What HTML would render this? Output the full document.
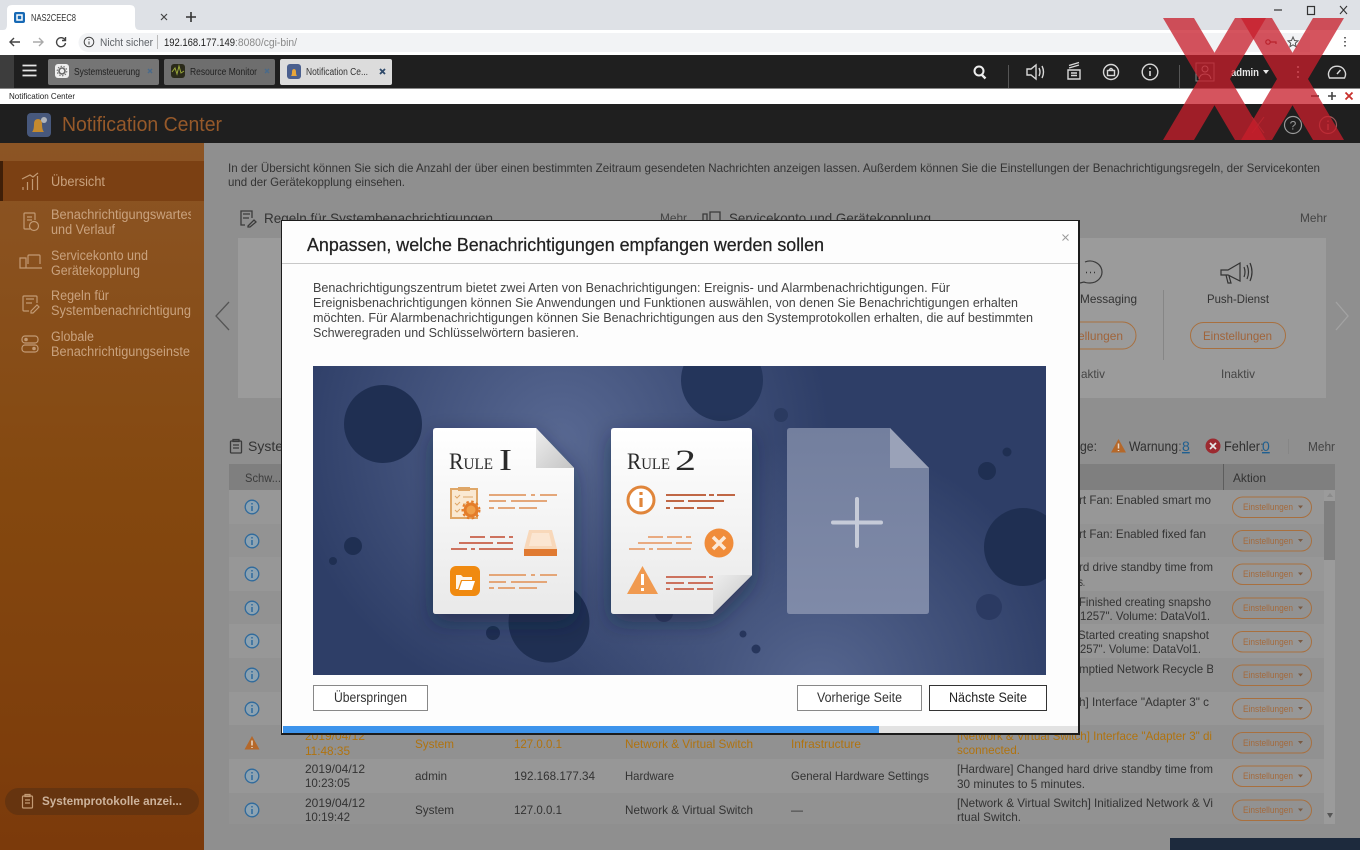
<!DOCTYPE html>
<html lang="de"><head><meta charset="utf-8"><title>Notification Center</title>
<style>
html,body{margin:0;padding:0;background:#8f8f8f;width:1360px;height:850px;overflow:hidden}
svg{display:block;font-family:"Liberation Sans",sans-serif}
.r{font-size:12px;fill:#333}
.o{font-size:12px;fill:#b0730f}
.b{font-size:9.5px;fill:#a46a3c}
.s{font-size:13.5px;fill:#c9a27e}
.l1{stroke:#e29c68;stroke-width:1.8;fill:none}
.l2{stroke:#c8604a;stroke-width:1.8;fill:none}
.l3{stroke:#b8532c;stroke-width:1.8;fill:none}
.l4{stroke:#e8a070;stroke-width:1.8;fill:none}
.i{fill:none;stroke:#d8d8d8;stroke-width:1.4}
.p{fill:none;stroke:#a8703f;stroke-width:1}
.sb{fill:none;stroke:#c29a74;stroke-width:1.2}
.g{fill:none;stroke:#3a3a3a;stroke-width:1.3}
</style></head><body>
<svg width="1360" height="850" viewBox="0 0 1360 850" xmlns="http://www.w3.org/2000/svg">
<defs>
<clipPath id="cs"><rect x="0" y="143" width="191" height="300"/></clipPath>
<clipPath id="ct"><rect x="229" y="490" width="984" height="334"/></clipPath>
<clipPath id="ci"><rect x="313" y="366" width="733" height="309"/></clipPath>
<radialGradient id="g1" gradientUnits="userSpaceOnUse" cx="560" cy="440" r="270"><stop offset="0" stop-color="#586892"/><stop offset="1" stop-color="#586892" stop-opacity="0"/></radialGradient>
<radialGradient id="g2" gradientUnits="userSpaceOnUse" cx="820" cy="690" r="250"><stop offset="0" stop-color="#56668f"/><stop offset="1" stop-color="#56668f" stop-opacity="0"/></radialGradient>
<linearGradient id="cw" x1="0" y1="0" x2="0" y2="1"><stop offset="0" stop-color="#fff"/><stop offset="1" stop-color="#e9e9e9"/></linearGradient>
<linearGradient id="cf" x1="0" y1="0" x2="1" y2="1"><stop offset="0" stop-color="#eee"/><stop offset="1" stop-color="#c4c4c4"/></linearGradient>
<linearGradient id="cg" x1="0" y1="0" x2="0" y2="1"><stop offset="0" stop-color="#737f9e"/><stop offset="1" stop-color="#7f8aa8"/></linearGradient>
<linearGradient id="sbg" x1="0" y1="0" x2="0" y2="1"><stop offset="0" stop-color="#8c5525"/><stop offset=".5" stop-color="#84480f"/><stop offset="1" stop-color="#7b3a0b"/></linearGradient>
<filter id="sh" x="-30%" y="-20%" width="160%" height="150%"><feDropShadow dx="0" dy="8" stdDeviation="11" flood-color="#141d38" flood-opacity=".5"/></filter>
</defs>

<!-- browser chrome -->
<rect width="1360" height="30" fill="#dee1e6"/>
<path d="M3 30q4 0 4-5V10q0-5 5-5h118q5 0 5 5v15q0 5 5 5z" fill="#fff"/>
<rect x="14" y="12" width="11" height="11" rx="2" fill="#1769b5"/><rect x="17" y="15" width="5" height="5" fill="none" stroke="#fff" stroke-width="1.5"/>
<text x="31" y="21" font-size="10" fill="#333" textLength="45" lengthAdjust="spacingAndGlyphs">NAS2CEEC8</text>
<path d="M161 14l6 6m0-6l-6 6" stroke="#444" stroke-width="1.2"/>
<path d="M191 12v10M186 17h10" stroke="#333" stroke-width="1.6"/>
<path d="M1274 10h8" stroke="#333" stroke-width="1.2"/><rect x="1307.500" y="6.500" width="7" height="8" fill="none" stroke="#333" stroke-width="1.2"/><path d="M1340 6l7 8m0-8l-7 8" stroke="#333" stroke-width="1.1"/>
<rect y="30" width="1360" height="25" fill="#fff"/>
<path d="M88 33H1310V52H88a9.500 9.500 0 0 1 0-19z" fill="#f2f3f5"/>
<path d="M20 42H10m4-4l-4 4 4 4" fill="none" stroke="#444" stroke-width="1.4"/>
<path d="M43 42H33m6-4l4 4-4 4" fill="none" stroke="#aaa" stroke-width="1.4"/>
<path d="M65 40a4.500 4.500 0 1 0 .5 3M65.500 37v3.500H62" fill="none" stroke="#444" stroke-width="1.4"/>
<circle cx="89" cy="42" r="4.800" fill="none" stroke="#444"/><path d="M89 41.500v3M89 39v1" stroke="#444"/>
<text x="100" y="46" font-size="11" fill="#5f6368" textLength="53" lengthAdjust="spacingAndGlyphs">Nicht sicher</text>
<path d="M157.500 35v14" stroke="#bbb"/>
<text x="164" y="46" font-size="11" fill="#222" textLength="71" lengthAdjust="spacingAndGlyphs">192.168.177.149</text>
<text x="235" y="46" font-size="11" fill="#888" textLength="62" lengthAdjust="spacingAndGlyphs">:8080/cgi-bin/</text>
<circle cx="1268" cy="42" r="2.200" fill="none" stroke="#8a2a2a" stroke-width="1.200"/><path d="M1270 42h6v2" fill="none" stroke="#8a2a2a" stroke-width="1.200"/>
<path d="M1293 37l1.500 3.500 3.500.4-2.700 2.300.8 3.500-3.100-1.900-3.100 1.900.8-3.500-2.700-2.300 3.500-.4z" fill="none" stroke="#555"/>
<path d="M1345 37v1.500M1345 41v1.500M1345 45v1.500" stroke="#444" stroke-width="1.6"/>

<!-- qts toolbar -->
<rect y="55" width="1360" height="33" fill="#1f1f1f"/>
<rect y="55" width="14" height="33" fill="#3d3d3d"/>
<path d="M22.500 65.500h14M22.500 70.500h14M22.500 75.500h14" stroke="#e6e6e6" stroke-width="1.700"/>
<rect x="48" y="59" width="111" height="26" rx="2" fill="#757575"/>
<rect x="164" y="59" width="111" height="26" rx="2" fill="#6e6e6e"/>
<rect x="280" y="59" width="112" height="26" rx="2" fill="#dcdcdc"/>
<rect x="55" y="64" width="14" height="14" rx="3" fill="#eee"/><circle cx="62" cy="71" r="3" fill="none" stroke="#666" stroke-width="1.600"/><circle cx="62" cy="71" r="4.800" fill="none" stroke="#666" stroke-width="1" stroke-dasharray="1.500 1.500"/>
<text x="74" y="75" font-size="10" fill="#222" textLength="66" lengthAdjust="spacingAndGlyphs">Systemsteuerung</text>
<path d="M148 69l4 4m0-4l-4 4" stroke="#4a6a8a" stroke-width="1.500"/>
<rect x="171" y="64" width="14" height="14" rx="3" fill="#2a2a1a"/><path d="M172 72l3-4 2 6 2-8 2 7 3-2" fill="none" stroke="#9aa83a"/>
<text x="190" y="75" font-size="10" fill="#222" textLength="67" lengthAdjust="spacingAndGlyphs">Resource Monitor</text>
<path d="M265 69l4 4m0-4l-4 4" stroke="#4a6a8a" stroke-width="1.500"/>
<rect x="287" y="64" width="14" height="15" rx="3" fill="#4a5f8e"/><path d="M291 76q1-1 1-4 0-3 2-3t2 3q0 3 1 4z" fill="#e8a63a"/>
<text x="306" y="75" font-size="10" fill="#333" textLength="62" lengthAdjust="spacingAndGlyphs">Notification Ce...</text>
<path d="M380 69l5 5m0-5l-5 5" stroke="#2f4a6a" stroke-width="1.800"/>
<circle cx="979" cy="71" r="4.500" fill="none" stroke="#eee" stroke-width="2"/><path d="M982 75l3.500 3.500" stroke="#eee" stroke-width="2.400"/>
<path d="M1008.500 65v23M1179.500 65v23" stroke="#555"/>
<path d="M1027 69h4l5-4v14l-5-4h-4zM1039 68q2 4 0 8M1042 66q3 6 0 12" class="i"/>
<path d="M1068 70h12v9h-12zM1069 68l10-3M1069 65.500l10-3M1071 73h6M1071 75.500h6" class="i"/>
<circle cx="1111" cy="72" r="7.500" class="i"/><rect x="1107.500" y="70.500" width="7" height="5" class="i"/><path d="M1109 70.500q2-4 4 0" class="i"/>
<circle cx="1150" cy="72" r="7.800" class="i"/><path d="M1150 71v5M1150 67.500v1.500" stroke="#ddd" stroke-width="1.600"/>
<rect x="1196" y="63" width="18" height="18" fill="none" stroke="#8a8a8a"/><circle cx="1205" cy="69" r="3" fill="none" stroke="#aaa"/><path d="M1199 79q1-5 6-5t6 5" fill="none" stroke="#aaa"/>
<text x="1231" y="76" font-size="11" font-weight="bold" fill="#e8e8e8" textLength="28" lengthAdjust="spacingAndGlyphs">admin</text>
<path d="M1263 70h6l-3 4z" fill="#e8e8e8"/>
<path d="M1298 66v2M1298 71v2M1298 76v2" stroke="#bbb" stroke-width="1.800"/>
<path d="M1329.500 78a8.500 8 0 1 1 15 0z" class="i"/><path d="M1337 74l3.500-4" stroke="#ddd" stroke-width="1.400"/>

<!-- window title -->
<rect y="88" width="1360" height="16" fill="#fff"/>
<rect y="88" width="1360" height="1" fill="#888"/>
<text x="9" y="99" font-size="8.500" fill="#222" textLength="66" lengthAdjust="spacingAndGlyphs">Notification Center</text>
<path d="M1311 96h8" stroke="#444" stroke-width="1.600"/>
<path d="M1328 96h8M1332 92v8" stroke="#444" stroke-width="1.600"/>
<path d="M1345.500 92.500l7 7m0-7l-7 7" stroke="#c8302c" stroke-width="1.800"/>

<!-- app header -->
<rect y="104" width="1360" height="39" fill="#1f1f1f"/>
<rect x="27" y="113" width="24" height="24" rx="4" fill="#47587c"/>
<path d="M32 132q2-2 2-8 0-5 4-5t4 5q0 6 2 8z" fill="#c48a2e"/><circle cx="44" cy="120" r="3" fill="#b0b4ba"/>
<text x="62" y="131" font-size="20" fill="#96592a" textLength="160" lengthAdjust="spacingAndGlyphs">Notification Center</text>
<path d="M1252 117l12 16M1264 117l-12 16" stroke="#8a3a3a" stroke-width="1"/>
<circle cx="1293" cy="125" r="8.500" fill="none" stroke="#9a9a9a" stroke-width="1.200"/><text x="1293" y="129.500" font-size="12" fill="#9a9a9a" text-anchor="middle">?</text>
<circle cx="1328" cy="125" r="8.500" fill="none" stroke="#9a5a5a" stroke-width="1.200"/><path d="M1328 124v6M1328 120.500v1.500" stroke="#9a5a5a" stroke-width="1.500"/>

<!-- sidebar -->
<rect y="143" width="204" height="707" fill="url(#sbg)"/>
<rect y="161" width="204" height="40" fill="#7b4013"/>
<rect y="161" width="3" height="40" fill="#3f1f08"/>
<path d="M23 190v-3M27.500 190v-8M32.500 190v-11M37.500 190v-14M22 179l8-4 3 2 5-4" class="sb"/>
<g clip-path="url(#cs)">
<text x="51" y="186" class="s" textLength="54" lengthAdjust="spacingAndGlyphs">Übersicht</text>
<text x="51" y="219" class="s" textLength="143" lengthAdjust="spacingAndGlyphs">Benachrichtigungswartes</text>
<text x="51" y="234" class="s" textLength="64" lengthAdjust="spacingAndGlyphs">und Verlauf</text>
<text x="51" y="260" class="s" textLength="97" lengthAdjust="spacingAndGlyphs">Servicekonto und</text>
<text x="51" y="275" class="s" textLength="89" lengthAdjust="spacingAndGlyphs">Gerätekopplung</text>
<text x="51" y="300" class="s" textLength="58" lengthAdjust="spacingAndGlyphs">Regeln für</text>
<text x="51" y="315" class="s" textLength="140" lengthAdjust="spacingAndGlyphs">Systembenachrichtigung</text>
<text x="51" y="341" class="s" textLength="43" lengthAdjust="spacingAndGlyphs">Globale</text>
<text x="51" y="356" class="s" textLength="139" lengthAdjust="spacingAndGlyphs">Benachrichtigungseinste</text>
</g>
<path d="M35 220v-6q0-1-1-1H25q-1 0-1 1v14q0 1 1 1h5M27 217h5M27 220h5" class="sb"/><circle cx="34" cy="226" r="4.500" class="sb"/>
<path d="M20 258h6v10h-6zM28 264v-8q0-1 1-1h10q1 0 1 1v8M26 268h16" class="sb"/>
<path d="M37 303v-6q0-1-1-1H24q-1 0-1 1v13q0 1 1 1h5M26 299h8M26 303h6M31 311l6-6 2 2-6 6h-2z" class="sb"/>
<rect x="22" y="336" width="16" height="7" rx="3" class="sb"/><rect x="22" y="345" width="16" height="7" rx="3" class="sb"/><circle cx="26" cy="339.500" r="1.800" fill="#c29a74"/><circle cx="34" cy="348.500" r="1.800" fill="#c29a74"/>
<rect x="5" y="788" width="194" height="27" rx="13.500" fill="#66340f"/>
<rect x="22.500" y="796" width="10" height="12" rx="1" class="sb"/><path d="M25 794.500h5v2h-5zM25 800h5M25 803h5" class="sb"/>
<text x="42" y="805" font-size="12" font-weight="bold" fill="#cdb39c" textLength="140" lengthAdjust="spacingAndGlyphs">Systemprotokolle anzei...</text>

<!-- content -->
<rect x="204" y="143" width="1156" height="707" fill="#8f8f8f"/>
<text x="228" y="172" class="r" textLength="1092" lengthAdjust="spacingAndGlyphs">In der Übersicht können Sie sich die Anzahl der über einen bestimmten Zeitraum gesendeten Nachrichten anzeigen lassen. Außerdem können Sie die Einstellungen der Benachrichtigungsregeln, der Servicekonten</text>
<text x="228" y="186" class="r" textLength="177" lengthAdjust="spacingAndGlyphs">und der Gerätekopplung einsehen.</text>
<path d="M252 218v-7h-11v14h4M243 214h7M243 218h6M248 226l6-6 2 2-6 5h-2z" class="g"/>
<text x="264" y="223" font-size="14" fill="#333" textLength="229" lengthAdjust="spacingAndGlyphs">Regeln für Systembenachrichtigungen</text>
<text x="660" y="222" font-size="12" fill="#444" textLength="27" lengthAdjust="spacingAndGlyphs">Mehr</text>
<path d="M703 214h4v11h-4zM710 222v-10h10v10" class="g"/>
<text x="729" y="223" font-size="14" fill="#333" textLength="202" lengthAdjust="spacingAndGlyphs">Servicekonto und Gerätekopplung</text>
<text x="1300" y="222" font-size="12" fill="#444" textLength="27" lengthAdjust="spacingAndGlyphs">Mehr</text>
<rect x="238" y="238" width="1088" height="160" fill="#9b9b9b"/>
<path d="M229 302l-13 14 13 14" fill="none" stroke="#555" stroke-width="1.300"/>
<path d="M1336 302l12 14-12 14" fill="none" stroke="#a3a3a3" stroke-width="1.300"/>
<path d="M1085 262a12 11 0 1 1 5 21q-4 0-6-1l-4 1" fill="none" stroke="#3a3a3a" stroke-width="1.200"/><path d="M1086 272.500h1M1090 272.500h1M1094 272.500h1" stroke="#333" stroke-width="1.400"/>
<text x="1080" y="303" class="r" textLength="57" lengthAdjust="spacingAndGlyphs">Messaging</text>
<rect x="1040" y="322" width="96" height="27" rx="13.500" class="p"/>
<text x="1078" y="340" font-size="12" fill="#a0643a" textLength="45" lengthAdjust="spacingAndGlyphs">ellungen</text>
<text x="1081" y="378" font-size="12" fill="#444" textLength="24" lengthAdjust="spacingAndGlyphs">aktiv</text>
<rect x="1163" y="290" width="1" height="70" fill="#868686"/>
<path d="M1221 270h7l12-7v18l-12-6h-7zM1226 275l2 8h3l-2-7M1240 263v18M1244 267q2 5 0 10M1247 265q3 7 0 14M1250 263q4 9 0 18" fill="none" stroke="#333" stroke-width="1.200"/>
<text x="1207" y="303" class="r" textLength="62" lengthAdjust="spacingAndGlyphs">Push-Dienst</text>
<rect x="1190.500" y="322.500" width="95" height="26" rx="13" class="p"/>
<text x="1203" y="340" font-size="12" fill="#a0643a" textLength="69" lengthAdjust="spacingAndGlyphs">Einstellungen</text>
<text x="1221" y="378" font-size="12" fill="#444" textLength="34" lengthAdjust="spacingAndGlyphs">Inaktiv</text>
<rect x="230.500" y="441" width="11" height="12" rx="1" class="g"/><path d="M233 439.500h6v2h-6zM233 445h6M233 448h6" class="g"/>
<text x="248" y="451" font-size="14" fill="#333">Systeme</text>
<text x="1080" y="451" font-size="14" fill="#333" textLength="17" lengthAdjust="spacingAndGlyphs">ge:</text>
<path d="M1118.500 439l7.500 13.500h-15z" fill="#b5682a"/><path d="M1118.500 443.500v5M1118.500 450v1" stroke="#e8d8c8" stroke-width="1.500"/>
<text x="1129" y="451" font-size="14" fill="#2f2f2f" textLength="49" lengthAdjust="spacingAndGlyphs">Warnung</text><text x="1178" y="451" font-size="14" fill="#555">:</text><text x="1182" y="451" font-size="14" fill="#1f5f90" text-decoration="underline">8</text>
<circle cx="1213" cy="446" r="7.500" fill="#9c2a30"/><path d="M1210 443l6 6m0-6l-6 6" stroke="#e8e8e8" stroke-width="1.700"/>
<text x="1224" y="451" font-size="14" fill="#2f2f2f" textLength="36" lengthAdjust="spacingAndGlyphs">Fehler</text><text x="1260" y="451" font-size="14" fill="#555">:</text><text x="1262" y="451" font-size="14" fill="#1f5f90" text-decoration="underline">0</text>
<rect x="1288" y="439" width="1" height="15" fill="#868686"/>
<text x="1308" y="451" font-size="12.500" fill="#444" textLength="27" lengthAdjust="spacingAndGlyphs">Mehr</text>

<!-- table -->
<rect x="229" y="464" width="1106" height="26" fill="#7f7f7f"/>
<text x="245" y="482" font-size="12" fill="#3c3c3c" textLength="36" lengthAdjust="spacingAndGlyphs">Schw...</text>
<rect x="1223" y="464" width="1" height="26" fill="#5d5d5d"/>
<text x="1233" y="482" class="r" textLength="33" lengthAdjust="spacingAndGlyphs">Aktion</text>
<rect x="229" y="490" width="1095" height="34" fill="#979797"/><rect x="229" y="524" width="1095" height="33" fill="#939393"/>
<rect x="229" y="557" width="1095" height="34" fill="#979797"/><rect x="229" y="591" width="1095" height="33" fill="#929292"/>
<rect x="229" y="624" width="1095" height="34" fill="#979797"/><rect x="229" y="658" width="1095" height="34" fill="#929292"/>
<rect x="229" y="692" width="1095" height="33" fill="#979797"/><rect x="229" y="725" width="1095" height="34" fill="#919191"/>
<rect x="229" y="759" width="1095" height="34" fill="#979797"/><rect x="229" y="793" width="1095" height="31" fill="#929292"/>
<rect x="1324" y="490" width="11" height="334" fill="#9b9b9b"/><rect x="1324" y="501" width="11" height="59" fill="#7f7f7f"/>
<path d="M1330 493l3 4h-6z" fill="#8a8a8a"/><path d="M1327 813h6l-3 5z" fill="#555"/>

<g fill="#8da3b2" stroke="#2f6a9c" stroke-width="1.300">
<circle cx="252" cy="507" r="6.800"/><circle cx="252" cy="541" r="6.800"/><circle cx="252" cy="574" r="6.800"/><circle cx="252" cy="608" r="6.800"/><circle cx="252" cy="641" r="6.800"/><circle cx="252" cy="675" r="6.800"/><circle cx="252" cy="709" r="6.800"/><circle cx="252" cy="776" r="6.800"/><circle cx="252" cy="810" r="6.800"/>
<path stroke-width="1.500" d="M252 506v5M252 503v1.500M252 540v5M252 537v1.500M252 573v5M252 570v1.500M252 607v5M252 604v1.500M252 640v5M252 637v1.500M252 674v5M252 671v1.500M252 708v5M252 705v1.500M252 775v5M252 772v1.500M252 809v5M252 806v1.500"/>
</g>
<path d="M252 736l7.500 13.500h-15z" fill="#b5682a"/><path d="M252 740.500v5M252 747v1" stroke="#e8d8c8" stroke-width="1.500"/>

<g clip-path="url(#ct)">
<text x="1079" y="504" class="r" textLength="132" lengthAdjust="spacingAndGlyphs">rt Fan: Enabled smart mo</text>
<text x="1079" y="538" class="r" textLength="127" lengthAdjust="spacingAndGlyphs">rt Fan: Enabled fixed fan</text>
<text x="1079" y="571" class="r" textLength="134" lengthAdjust="spacingAndGlyphs">rd drive standby time from</text>
<text x="1079" y="586" class="r" textLength="6" lengthAdjust="spacingAndGlyphs">s.</text>
<text x="1079" y="606" class="r" textLength="132" lengthAdjust="spacingAndGlyphs">Finished creating snapsho</text>
<text x="1080" y="620" class="r" textLength="130" lengthAdjust="spacingAndGlyphs">1257". Volume: DataVol1.</text>
<text x="1078" y="639" class="r" textLength="131" lengthAdjust="spacingAndGlyphs">Started creating snapshot</text>
<text x="1080" y="653" class="r" textLength="121" lengthAdjust="spacingAndGlyphs">257". Volume: DataVol1.</text>
<text x="1079" y="673" class="r" textLength="135" lengthAdjust="spacingAndGlyphs">mptied Network Recycle B</text>
<text x="1079" y="706" class="r" textLength="130" lengthAdjust="spacingAndGlyphs">h] Interface "Adapter 3" c</text>

<text x="305" y="740" class="o" textLength="60" lengthAdjust="spacingAndGlyphs">2019/04/12</text><text x="305" y="755" class="o" textLength="45" lengthAdjust="spacingAndGlyphs">11:48:35</text>
<text x="415" y="748" class="o" textLength="39" lengthAdjust="spacingAndGlyphs">System</text><text x="514" y="748" class="o" textLength="48" lengthAdjust="spacingAndGlyphs">127.0.0.1</text>
<text x="625" y="748" class="o" textLength="128" lengthAdjust="spacingAndGlyphs">Network &amp; Virtual Switch</text><text x="791" y="748" class="o" textLength="70" lengthAdjust="spacingAndGlyphs">Infrastructure</text>
<text x="957" y="740" class="o" textLength="255" lengthAdjust="spacingAndGlyphs">[Network &amp; Virtual Switch] Interface "Adapter 3" di</text><text x="957" y="754" class="o" textLength="63" lengthAdjust="spacingAndGlyphs">sconnected.</text>

<text x="305" y="773" class="r" textLength="60" lengthAdjust="spacingAndGlyphs">2019/04/12</text><text x="305" y="787" class="r" textLength="45" lengthAdjust="spacingAndGlyphs">10:23:05</text>
<text x="415" y="780" class="r" textLength="32" lengthAdjust="spacingAndGlyphs">admin</text><text x="514" y="780" class="r" textLength="81" lengthAdjust="spacingAndGlyphs">192.168.177.34</text>
<text x="625" y="780" class="r" textLength="49" lengthAdjust="spacingAndGlyphs">Hardware</text><text x="791" y="780" class="r" textLength="138" lengthAdjust="spacingAndGlyphs">General Hardware Settings</text>
<text x="957" y="773" class="r" textLength="256" lengthAdjust="spacingAndGlyphs">[Hardware] Changed hard drive standby time from</text><text x="957" y="788" class="r" textLength="128" lengthAdjust="spacingAndGlyphs">30 minutes to 5 minutes.</text>

<text x="305" y="807" class="r" textLength="60" lengthAdjust="spacingAndGlyphs">2019/04/12</text><text x="305" y="821" class="r" textLength="45" lengthAdjust="spacingAndGlyphs">10:19:42</text>
<text x="415" y="814" class="r" textLength="39" lengthAdjust="spacingAndGlyphs">System</text><text x="514" y="814" class="r" textLength="48" lengthAdjust="spacingAndGlyphs">127.0.0.1</text>
<text x="625" y="814" class="r" textLength="128" lengthAdjust="spacingAndGlyphs">Network &amp; Virtual Switch</text><text x="791" y="814" class="r">—</text>
<text x="957" y="807" class="r" textLength="256" lengthAdjust="spacingAndGlyphs">[Network &amp; Virtual Switch] Initialized Network &amp; Vi</text><text x="957" y="821" class="r" textLength="64" lengthAdjust="spacingAndGlyphs">rtual Switch.</text>
</g>

<rect x="1232.500" y="497" width="79" height="20.500" rx="10.200" class="p"/><rect x="1232.500" y="530.500" width="79" height="20.500" rx="10.200" class="p"/><rect x="1232.500" y="564" width="79" height="20.500" rx="10.200" class="p"/><rect x="1232.500" y="598" width="79" height="20.500" rx="10.200" class="p"/><rect x="1232.500" y="631.500" width="79" height="20.500" rx="10.200" class="p"/><rect x="1232.500" y="665" width="79" height="20.500" rx="10.200" class="p"/><rect x="1232.500" y="698.500" width="79" height="20.500" rx="10.200" class="p"/><rect x="1232.500" y="732.500" width="79" height="20.500" rx="10.200" class="p"/><rect x="1232.500" y="766" width="79" height="20.500" rx="10.200" class="p"/><rect x="1232.500" y="800" width="79" height="20.500" rx="10.200" class="p"/>
<text x="1243" y="510" class="b" textLength="50" lengthAdjust="spacingAndGlyphs">Einstellungen</text><text x="1243" y="544" class="b" textLength="50" lengthAdjust="spacingAndGlyphs">Einstellungen</text><text x="1243" y="577" class="b" textLength="50" lengthAdjust="spacingAndGlyphs">Einstellungen</text><text x="1243" y="611" class="b" textLength="50" lengthAdjust="spacingAndGlyphs">Einstellungen</text><text x="1243" y="645" class="b" textLength="50" lengthAdjust="spacingAndGlyphs">Einstellungen</text><text x="1243" y="678" class="b" textLength="50" lengthAdjust="spacingAndGlyphs">Einstellungen</text><text x="1243" y="712" class="b" textLength="50" lengthAdjust="spacingAndGlyphs">Einstellungen</text><text x="1243" y="746" class="b" textLength="50" lengthAdjust="spacingAndGlyphs">Einstellungen</text><text x="1243" y="779" class="b" textLength="50" lengthAdjust="spacingAndGlyphs">Einstellungen</text><text x="1243" y="813" class="b" textLength="50" lengthAdjust="spacingAndGlyphs">Einstellungen</text>
<path fill="#7a5a42" d="M1298 505.500h5l-2.500 3zM1298 539h5l-2.500 3zM1298 572.500h5l-2.500 3zM1298 606.500h5l-2.500 3zM1298 640h5l-2.500 3zM1298 673.500h5l-2.500 3zM1298 707h5l-2.500 3zM1298 741h5l-2.500 3zM1298 774.500h5l-2.500 3zM1298 808.500h5l-2.500 3z"/>
<rect x="1170" y="838" width="190" height="12" fill="#1d2a3d"/>

<!-- dialog -->
<rect x="281" y="220" width="799" height="515" fill="#1c1c1c"/>
<rect x="282" y="221" width="796" height="512" fill="#fdfdfd"/>
<rect x="282" y="263" width="796" height="1" fill="#c8c8c8"/>
<text x="307" y="251" font-size="18" fill="#222" stroke="#222" stroke-width=".25" textLength="517" lengthAdjust="spacingAndGlyphs">Anpassen, welche Benachrichtigungen empfangen werden sollen</text>
<path d="M1062.500 234.500l6 6m0-6l-6 6" stroke="#999" stroke-width="1"/>
<g font-size="13" fill="#444">
<text x="313" y="292" textLength="637" lengthAdjust="spacingAndGlyphs">Benachrichtigungszentrum bietet zwei Arten von Benachrichtigungen: Ereignis- und Alarmbenachrichtigungen. Für</text>
<text x="313" y="307" textLength="705" lengthAdjust="spacingAndGlyphs">Ereignisbenachrichtigungen können Sie Anwendungen und Funktionen auswählen, von denen Sie Benachrichtigungen erhalten</text>
<text x="313" y="322" textLength="720" lengthAdjust="spacingAndGlyphs">möchten. Für Alarmbenachrichtigungen können Sie Benachrichtigungen aus den Systemprotokollen erhalten, die auf bestimmten</text>
<text x="313" y="337" textLength="266" lengthAdjust="spacingAndGlyphs">Schweregraden und Schlüsselwörtern basieren.</text>
</g>

<!-- illustration -->
<g clip-path="url(#ci)">
<rect x="313" y="366" width="733" height="309" fill="#2e3e67"/>
<rect x="313" y="366" width="733" height="309" fill="url(#g1)"/>
<rect x="313" y="366" width="733" height="309" fill="url(#g2)"/>
<g fill="#1f2f52">
<circle cx="383" cy="424" r="39"/><circle cx="353" cy="546" r="9"/><circle cx="333" cy="561" r="4"/>
<circle cx="549" cy="622" r="40.500"/><circle cx="493" cy="633" r="7"/><circle cx="664" cy="613" r="9" fill="#2b3a62"/>
<circle cx="722" cy="380" r="41" fill="#24355b"/><circle cx="781" cy="415" r="7" fill="#2a3a60"/><circle cx="1007" cy="452" r="4.500"/><circle cx="987" cy="471" r="9"/>
<circle cx="1023" cy="547" r="39"/><circle cx="989" cy="607" r="13" fill="#2b3a62"/><circle cx="743" cy="634" r="3.500" fill="#27365c"/><circle cx="756" cy="649" r="4.500" fill="#27365c"/>
</g>
<!-- card 1 -->
<path d="M436 428H536L574 468V611q0 3-3 3H436q-3 0-3-3V431q0-3 3-3z" fill="url(#cw)" filter="url(#sh)"/>
<path d="M536 428L574 468H536z" fill="url(#cf)"/>
<text x="449" y="469" font-family="Liberation Serif,serif" fill="#2a2a2a" textLength="44" lengthAdjust="spacingAndGlyphs"><tspan font-size="23">R</tspan><tspan font-size="16">ULE</tspan></text>
<text x="499" y="470" font-family="Liberation Serif,serif" font-size="31" fill="#2a2a2a" textLength="13" lengthAdjust="spacingAndGlyphs">I</text>
<rect x="451" y="489" width="26" height="29" fill="#fae9d2" stroke="#dfa768" stroke-width="2"/><rect x="458" y="487" width="12" height="4" fill="#dfa768"/>
<path d="M455 496l2 2 3-3M455 503l2 2 3-3M455 510l2 2 3-3M463 497h10M463 504h6" stroke="#dfa768" fill="none"/>
<circle cx="471" cy="510" r="6" fill="#f0a04a" stroke="#e47d2a" stroke-width="3"/><circle cx="471" cy="510" r="8.500" fill="none" stroke="#e47d2a" stroke-width="2" stroke-dasharray="2.500 2.500"/>
<path class="l1" d="M489 495h37M531 495h4M540 495h17M489 501h17M511 501h36M489 508h5M498 508h17M519 508h18"/>
<path class="l2" d="M470 537h15M490 537h15M509 537h4M459 543h34M497 543h16M451 549h16M471 549h4M479 549h34"/>
<path d="M529 530h23l5 19h-33z" fill="#f8d8ba"/><path d="M532 533h17l3 13h-23z" fill="#fbe6d2"/><rect x="524" y="549" width="33" height="7" fill="#e07a32"/>
<rect x="450" y="566" width="30" height="30" rx="6" fill="#f08a10"/>
<path d="M456 589v-14h5l2 2h9v3h-11l-3 9z" fill="#fff" opacity=".9"/><path d="M459 590l3-9h13l-3 9z" fill="#fff"/>
<path class="l1" d="M489 575h37M531 575h4M540 575h17M489 582h17M511 582h36M489 588h5M498 588h17M519 588h18"/>
<!-- card 2 -->
<path d="M614 428H749q3 0 3 3V575L713 614H614q-3 0-3-3V431q0-3 3-3z" fill="url(#cw)" filter="url(#sh)"/>
<text x="627" y="469" font-family="Liberation Serif,serif" fill="#2a2a2a" textLength="43" lengthAdjust="spacingAndGlyphs"><tspan font-size="23">R</tspan><tspan font-size="16">ULE</tspan></text>
<text x="675" y="470" font-family="Liberation Serif,serif" font-size="30" fill="#2a2a2a" textLength="21" lengthAdjust="spacingAndGlyphs">2</text>
<circle cx="641" cy="500" r="13" fill="#fff" stroke="#e0853a" stroke-width="3"/><path d="M641 498v9M641 492v3" stroke="#e0853a" stroke-width="3.200"/>
<path class="l3" d="M666 495h40M709 495h5M717 495h18M666 501h18M688 501h36M666 508h4M674 508h20M697 508h17"/>
<path class="l4" d="M648 537h15M667 537h15M686 537h5M638 543h34M676 543h16M629 549h16M649 549h4M657 549h34"/>
<circle cx="719" cy="543" r="14.500" fill="#f08c3a"/><path d="M713 537l12 12m0-12l-12 12" stroke="#fbe9d8" stroke-width="3.500"/>
<path d="M642.500 566L658 594H627z" fill="#f09a50"/><path d="M642.500 574v11M642.500 588v3" stroke="#fff" stroke-width="3"/>
<path class="l2" d="M666 577h40M709 577h4M666 583h18M688 583h25M666 589h4M674 589h20M697 589h16"/>
<path d="M713 575H752L713 614z" fill="url(#cf)"/>
<!-- card 3 -->
<path d="M790 428H890L929 468V611q0 3-3 3H790q-3 0-3-3V431q0-3 3-3z" fill="url(#cg)"/>
<path d="M890 428L929 468H890z" fill="#9aa2b8"/>
<path d="M857 499v47M833 522.500h48" stroke="#c6cbd8" stroke-width="4" stroke-linecap="round"/>
</g>

<!-- dialog buttons -->
<rect x="313.500" y="685.500" width="114" height="25" fill="#fff" stroke="#888"/>
<text x="334" y="702" font-size="13.500" fill="#333" textLength="73" lengthAdjust="spacingAndGlyphs">Überspringen</text>
<rect x="797.500" y="685.500" width="124" height="25" fill="#fff" stroke="#888"/>
<text x="817" y="702" font-size="13.500" fill="#333" textLength="85" lengthAdjust="spacingAndGlyphs">Vorherige Seite</text>
<rect x="929.500" y="685.500" width="117" height="25" fill="#fff" stroke="#333"/>
<text x="949" y="702" font-size="13.500" fill="#222" textLength="78" lengthAdjust="spacingAndGlyphs">Nächste Seite</text>
<rect x="283" y="726" width="795" height="7" fill="#e2e2e2"/>
<rect x="283" y="726" width="596" height="7" fill="#3d94ec"/>

<!-- watermark -->
<g fill="#c81e2c" fill-opacity=".76">
<polygon points="1163,18 1194,18 1214.500,52.700 1235,18 1266,18 1230,79 1266,140 1235,140 1214.500,105.300 1194,140 1163,140 1199,79"/>
<polygon points="1241,18 1272,18 1292.500,52.700 1313,18 1344,18 1308,79 1344,140 1313,140 1292.500,105.300 1272,140 1241,140 1277,79"/>
</g>
</svg>
</body></html>
